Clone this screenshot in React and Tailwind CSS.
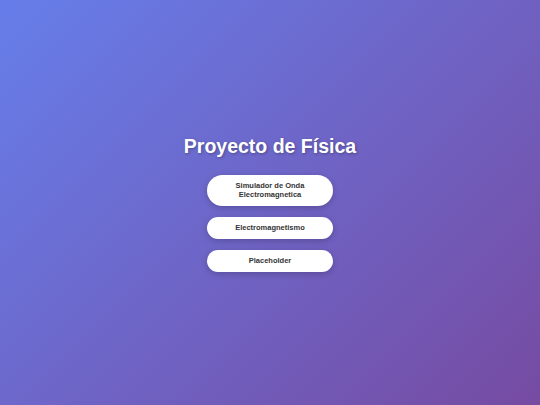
const buttons = ["Simulador de Onda Electromagnetica", "Electromagnetismo", "Placeholder"];

export default function App() {
  return (
    <div
      className="w-full h-[405px] flex flex-col items-center justify-center bg-[linear-gradient(135deg,#667eea_0%,#764ba2_100%)]"
      style={{ fontFamily: "'Liberation Sans', Arial, sans-serif" }}
    >
      <h1 className="text-white font-bold text-[19.5px] leading-[24px] mb-[17px] [text-shadow:1px_1px_3px_rgba(0,0,0,0.3)]">
        Proyecto de Física
      </h1>
      <div className="flex flex-col items-center gap-[11px]">
        {buttons.map((b) => (
          <button
            key={b}
            className="w-[126px] bg-white rounded-full py-[6.5px] px-[18px] text-[7.5px] leading-[9px] font-bold text-[#333] shadow-[0_2px_6px_rgba(0,0,0,0.2)]"
          >
            {b}
          </button>
        ))}
      </div>
    </div>
  );
}
